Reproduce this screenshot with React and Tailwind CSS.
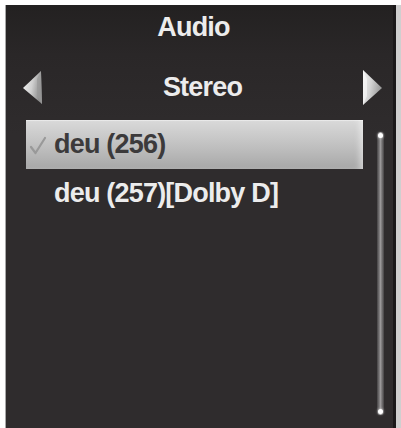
import React from "react";

function LeftArrow() {
  return (
    <svg width="21" height="35" viewBox="0 0 21 35" className="shrink-0">
      <defs>
        <linearGradient id="la" x1="0" y1="0" x2="1" y2="0.3">
          <stop offset="0" stopColor="#f4f4f4" />
          <stop offset="0.55" stopColor="#d0d0d0" />
          <stop offset="1" stopColor="#8e8e8e" />
        </linearGradient>
      </defs>
      <polygon points="1,18 19,1 20,34" fill="url(#la)" />
      <polygon points="19,1 20,34 15,26 15,9" fill="#9a9a9a" opacity="0.7" />
    </svg>
  );
}

function RightArrow() {
  return (
    <svg width="21" height="37" viewBox="0 0 21 37" className="shrink-0">
      <defs>
        <linearGradient id="ra" x1="0" y1="0" x2="1" y2="0.3">
          <stop offset="0" stopColor="#f2f2f2" />
          <stop offset="0.5" stopColor="#d2d2d2" />
          <stop offset="1" stopColor="#9a9a9a" />
        </linearGradient>
      </defs>
      <polygon points="1,1 20,19 1,36" fill="url(#ra)" />
      <polygon points="1,1 5,10 5,27 1,36" fill="#fafafa" opacity="0.6" />
    </svg>
  );
}

export default function App() {
  return (
    <div className="w-[401px] h-[428px] bg-white flex pt-[5px] pl-[5px] overflow-hidden">
      <div className="flex flex-col w-[391px] h-full border-l border-l-[#a8a8a8] border-r-[3px] border-r-[#1b191a] bg-[linear-gradient(to_bottom,#232121_0px,#2a2728_50px,#2f2c2d_130px)] font-['Liberation_Sans',Arial,sans-serif] font-bold tracking-[-0.8px]">
        <div className="h-[45px] shrink-0 flex items-center justify-center pr-[12px] text-[27px] leading-none text-[#ececec]">
          Audio
        </div>
        <div className="h-[65px] shrink-0 mt-[5px] flex items-center pl-[16px] pr-[10px]">
          <LeftArrow />
          <div className="flex-1 text-center text-[27px] leading-none text-[#ececec]">Stereo</div>
          <RightArrow />
        </div>
        <div className="flex flex-1 min-h-0">
          <div className="flex flex-col pl-[20px] w-[357px] shrink-0">
            <div className="h-[49px] flex items-center bg-[linear-gradient(to_bottom,#d9d9d9_0%,#c9c9c9_35%,#bababa_65%,#a7a7a7_100%)] shadow-[inset_-6px_0_6px_-3px_rgba(255,255,255,0.5),inset_0_1px_0_rgba(255,255,255,0.4)]">
              <svg width="28" height="49" viewBox="0 0 28 49" className="shrink-0">
                <path d="M5 27 L9.5 33 L19 18" fill="none" stroke="#999999" strokeWidth="2.2" strokeLinecap="round" strokeLinejoin="round" />
              </svg>
              <span className="text-[27px] leading-none text-[#3c3a3b]">deu (256)</span>
            </div>
            <div className="h-[49px] flex items-center pl-[28px]">
              <span className="text-[27px] leading-none text-[#ececec]">deu (257)[Dolby D]</span>
            </div>
          </div>
          <div className="ml-[14px] pt-[12px] pb-[13px] flex">
            <div className="relative w-[7px] h-full rounded-full bg-[linear-gradient(to_right,#444243,#9a9899_50%,#444243)]">
              <div className="absolute left-[1px] top-[1px] w-[5px] h-[5px] rounded-full bg-white shadow-[0_0_3px_rgba(255,255,255,0.8)]" />
              <div className="absolute left-[1px] bottom-[1px] w-[5px] h-[5px] rounded-full bg-white shadow-[0_0_3px_rgba(255,255,255,0.8)]" />
            </div>
          </div>
        </div>
      </div>
      <div className="flex-1 bg-[#cfcfcf]" />
    </div>
  );
}
